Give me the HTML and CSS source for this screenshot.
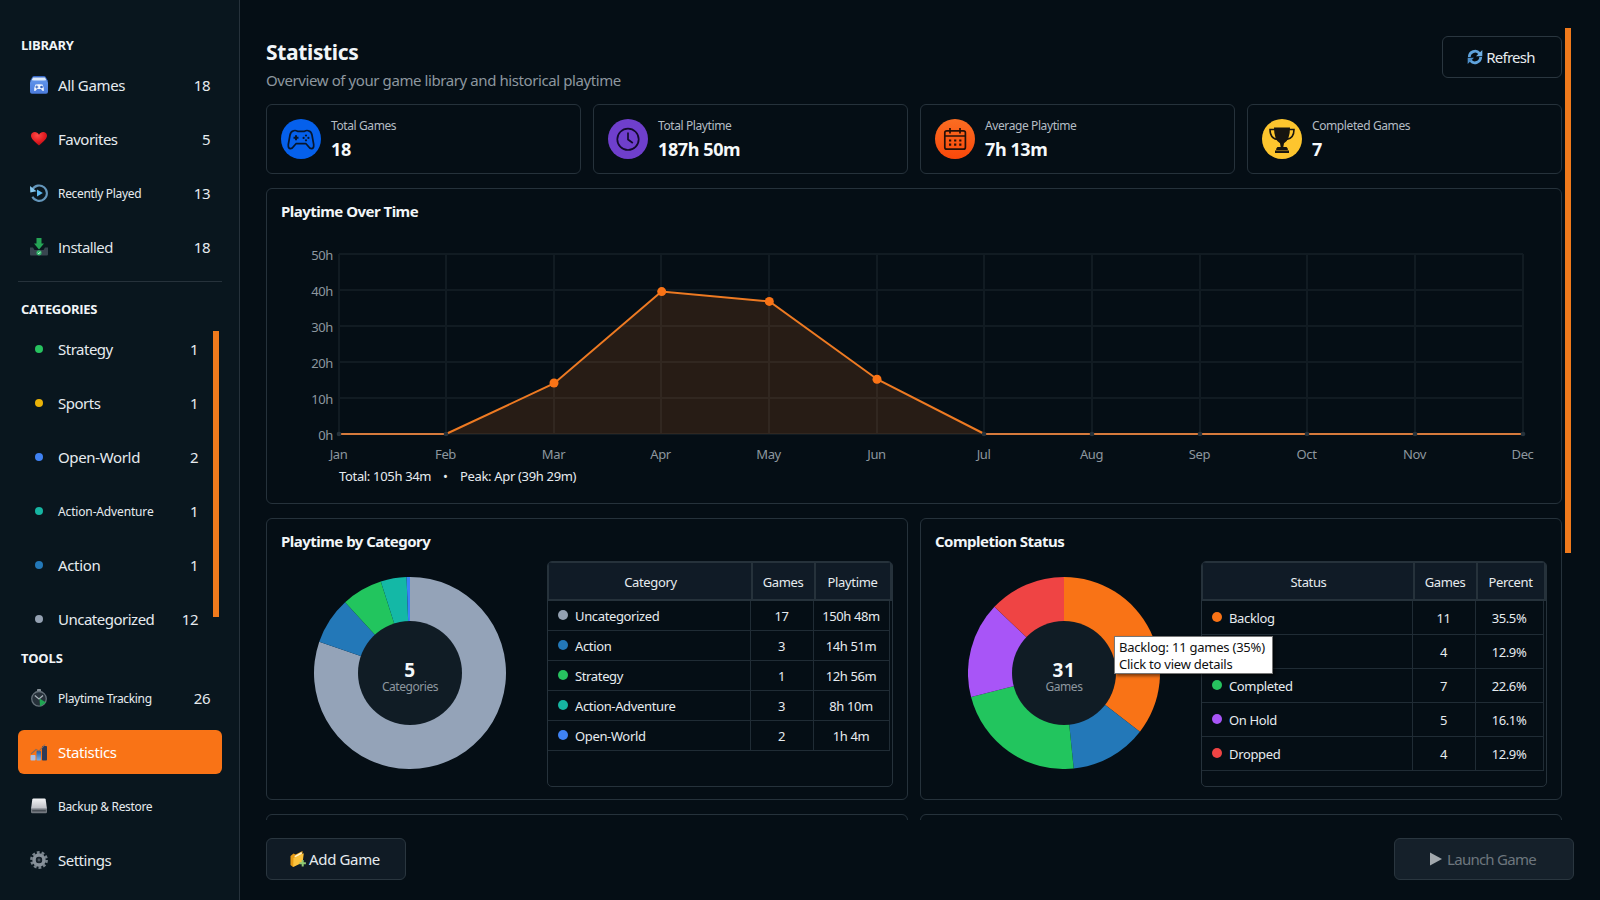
FILE: index.html
```html
<!DOCTYPE html>
<html lang="en">
<head>
<meta charset="utf-8">
<title>Statistics</title>
<link rel="stylesheet" href="styles.css">
</head>
<body>
<div class="app">
  <aside class="sidebar">
    <h2 class="group plain">LIBRARY</h2>
    <nav class="list">
      <a class="item"><svg class="ico" viewBox="0 0 18 18"><defs><linearGradient id="bx" x1="0" y1="0" x2="0" y2="1"><stop offset="0" stop-color="#5f93ea"/><stop offset="1" stop-color="#4b7bdc"/></linearGradient></defs><path d="M2 1.500Q2.300 0 4 0H14Q15.700 0 16 1.500L18 5H0z" fill="#3667c4"/><path d="M3 1.500H15L16.500 4.500Q9 6.500 1.500 4.500z" fill="#dbe9fb"/><rect x="0" y="4.500" width="18" height="13.300" rx="2" fill="url(#bx)"/><path d="M5.500 8.500Q9 7.800 12.500 8.500Q14.200 12 13.800 14.700Q12.500 15.600 11 13H7Q5.500 15.600 4.200 14.700Q3.800 12 5.500 8.500z" fill="#f2f7ff"/><path d="M6.800 9.500v3M5.300 11h3" stroke="#3463bd" stroke-width="1"/><circle cx="11.500" cy="11" r="1.300" fill="#3463bd"/></svg><span class="name wide">All Games</span><span class="num">18</span></a>
      <a class="item"><svg class="ico" viewBox="0 0 18 18"><defs><radialGradient id="ht" cx=".4" cy=".25" r=".8"><stop offset="0" stop-color="#ff4a46"/><stop offset=".6" stop-color="#e01b21"/><stop offset="1" stop-color="#a90d14"/></radialGradient></defs><path d="M9 15.500C4 11.500 1 8.700 1 5.600C1 3.200 2.800 2 4.800 2C6.500 2 8.100 3 9 4.800C9.900 3 11.500 2 13.200 2C15.200 2 17 3.200 17 5.600C17 8.700 14 11.500 9 15.500z" fill="url(#ht)"/></svg><span class="name">Favorites</span><span class="num">5</span></a>
      <a class="item"><svg class="ico" viewBox="0 0 18 18"><path d="M2.400 5.500A7.700 7.700 0 1 1 2.400 12.800" fill="none" stroke="#6496bb" stroke-width="2.100"/><path d="M0 2L.300 8.500L6.500 7.300z" fill="#86c8ef"/><path d="M7 5.500L12.800 9L7 12.500z" fill="#5db8f0"/></svg><span class="name small">Recently Played</span><span class="num">13</span></a>
      <a class="item"><svg class="ico" viewBox="0 0 18 18"><path d="M0 9.500H3L4.500 12H13.500L15 9.500H18V16.500Q18 17.500 17 17.500H1Q0 17.500 0 16.500z" fill="#38454f"/><path d="M6.500 0H11.500V5.500H14L9 11.500L4 5.500H6.500z" fill="#25a455"/><circle cx="9" cy="14.800" r="2.600" fill="#2fb268"/><path d="M7.800 14.900L8.800 15.800L10.400 13.800" fill="none" stroke="#d9ffe6" stroke-width=".9"/></svg><span class="name plain">Installed</span><span class="num">18</span></a>
    </nav>
    <hr class="rule">
    <h2 class="group plain group-cat">CATEGORIES</h2>
    <div class="scroller">
      <nav class="list list-cat">
        <a class="item"><i class="dot green"></i><span class="name">Strategy</span><span class="num">1</span></a>
        <a class="item"><i class="dot yellow"></i><span class="name">Sports</span><span class="num">1</span></a>
        <a class="item"><i class="dot indigo"></i><span class="name wide">Open-World</span><span class="num">2</span></a>
        <a class="item"><i class="dot teal"></i><span class="name small loose">Action-Adventure</span><span class="num">1</span></a>
        <a class="item"><i class="dot blue"></i><span class="name wide">Action</span><span class="num">1</span></a>
        <a class="item"><i class="dot grey"></i><span class="name">Uncategorized</span><span class="num">12</span></a>
      </nav>
      <div class="thumb thumb-side"></div>
    </div>
    <h2 class="group group-tools">TOOLS</h2>
    <nav class="list">
      <a class="item"><svg class="ico" viewBox="0 0 18 18"><rect x="7" y="0" width="4" height="2.500" rx=".8" fill="#88929a"/><circle cx="9" cy="9.800" r="7.300" fill="#26313a" stroke="#66727a" stroke-width="1.300"/><path d="M4.800 6.500L9 10L13 6.500" fill="none" stroke="#a9b3ba" stroke-width="1.200"/><path d="M9.500 9.500L16 13.500L10 17.500z" fill="#1fa552"/></svg><span class="name small">Playtime Tracking</span><span class="num">26</span></a>
      <a class="item active"><svg class="ico" viewBox="0 0 18 18"><defs><linearGradient id="b2" x1="0" y1="0" x2="0" y2="1"><stop offset="0" stop-color="#1f5ea8"/><stop offset="1" stop-color="#79aee6"/></linearGradient></defs><rect x=".5" y="12" width="5" height="5.500" rx=".8" fill="#a9bfe6"/><rect x="6.500" y="8" width="4.500" height="9.500" rx=".8" fill="url(#b2)"/><rect x="12" y="3" width="5" height="14.500" rx=".8" fill="#303a55"/><path d="M1 11L6 6.500L9 8L15 1.500" fill="none" stroke="#8f6a55" stroke-width="1.100"/></svg><span class="name wide">Statistics</span></a>
      <a class="item"><svg class="ico" viewBox="0 0 18 18"><defs><linearGradient id="dr" x1="0" y1="0" x2="0" y2="1"><stop offset="0" stop-color="#f4f5f7"/><stop offset="1" stop-color="#b9bcc2"/></linearGradient></defs><path d="M3.500 1.500H14.500Q15.500 1.500 15.700 2.500L17 12H1L2.300 2.500Q2.500 1.500 3.500 1.500z" fill="url(#dr)"/><path d="M1 11.500H17V15Q17 16.200 15.800 16.200H2.200Q1 16.200 1 15z" fill="#737980"/><rect x="2.200" y="13.200" width="13.600" height="1.200" fill="#3f454c"/></svg><span class="name small">Backup &amp; Restore</span></a>
      <a class="item"><svg class="ico" viewBox="0 0 18 18"><circle cx="9" cy="9" r="7.600" fill="none" stroke="#78838c" stroke-width="2.600" stroke-dasharray="2.800 1.975"/><circle cx="9" cy="9" r="4.900" fill="none" stroke="#87919a" stroke-width="3.600"/><circle cx="9" cy="9" r="3.200" fill="#17222b"/><circle cx="9" cy="9" r="1.400" fill="#49545d"/></svg><span class="name">Settings</span></a>
    </nav>
  </aside>

  <main class="main">
    <div class="viewport">
      <div class="page">
        <header class="head">
          <div>
            <h1 class="title">Statistics</h1>
            <p class="subtitle">Overview of your game library and historical playtime</p>
          </div>
          <button class="btn btn-refresh"><svg class="ico-s" viewBox="0 0 16 16"><g fill="none" stroke="#5fa3dc" stroke-width="2.800"><path d="M2.300 8A5.800 5.800 0 0 1 12.500 4.300"/><path d="M13.700 8A5.800 5.800 0 0 1 3.500 11.700"/></g><path d="M15.300 1V7.200H9z" fill="#6fb0e6"/><path d="M.700 15V8.800H7z" fill="#4d8fca"/></svg><span>Refresh</span></button>
        </header>

        <section class="stats">
          <div class="card stat"><svg class="badge" viewBox="0 0 40 40"><circle cx="20" cy="20" r="20" fill="#0560ec"/><g fill="none" stroke="#06162e" stroke-width="1.700" stroke-linejoin="round"><path d="M12.500 11.800Q14.500 11 16.500 12.300H23.500Q25.500 11 27.500 11.800Q30.300 12.300 31 16L32.700 25.500Q33 29.500 30.500 29.700Q28.800 29.700 27 27L25 24.700H15L13 27Q11.200 29.700 9.500 29.700Q7 29.500 7.300 25.500L9 16Q9.700 12.300 12.500 11.800z"/></g><path d="M15 16.300v5M12.500 18.800h5" stroke="#06162e" stroke-width="2"/><g fill="#06162e"><circle cx="25" cy="16.500" r="1.100"/><circle cx="25" cy="21.300" r="1.100"/><circle cx="22.600" cy="18.900" r="1.100"/><circle cx="27.400" cy="18.900" r="1.100"/></g></svg><div><div class="label">Total Games</div><div class="value">18</div></div></div>
          <div class="card stat"><svg class="badge" viewBox="0 0 40 40"><circle cx="20" cy="20" r="20" fill="#6f3fcc"/><circle cx="20" cy="20.300" r="10.700" fill="none" stroke="#120a2b" stroke-width="1.700"/><path d="M20 13.500V20.500L24.800 24" fill="none" stroke="#120a2b" stroke-width="1.700"/></svg><div><div class="label">Total Playtime</div><div class="value">187h 50m</div></div></div>
          <div class="card stat"><svg class="badge" viewBox="0 0 40 40"><defs><linearGradient id="og" x1="0" y1="0" x2="0" y2="1"><stop offset="0" stop-color="#fb6d22"/><stop offset="1" stop-color="#f9480a"/></linearGradient></defs><circle cx="20" cy="20" r="20" fill="url(#og)"/><rect x="9.800" y="11.800" width="20.600" height="18.400" rx="2" fill="none" stroke="#241008" stroke-width="1.700"/><path d="M10 17H30.500M15 9V14.500M25 9V14.500" stroke="#241008" stroke-width="1.700"/><path d="M14 21.500h12.500M14 25.700h12.500" stroke="#241008" stroke-width="2.200" stroke-dasharray="2.200 2.900"/></svg><div><div class="label">Average Playtime</div><div class="value">7h 13m</div></div></div>
          <div class="card stat"><svg class="badge" viewBox="0 0 40 40"><circle cx="20" cy="20" r="20" fill="#fdc52e"/><path d="M12 8.500H28Q28 21 22 24.300L21.300 28H24.500Q26 28.500 26 31.500H27V34H13V31.500H14Q14 28.500 15.500 28H18.700L18 24.300Q12 21 12 8.500z" fill="#161410"/><path d="M13 10.500H8Q8 19.500 15.500 20.500M27 10.500H32Q32 19.500 24.500 20.500" fill="none" stroke="#161410" stroke-width="1.600"/><path d="M14 31.600H26" stroke="#a07c20" stroke-width=".8"/></svg><div><div class="label">Completed Games</div><div class="value">7</div></div></div>
        </section>

        <section class="card chart-card">
          <h3 class="heading">Playtime Over Time</h3>
          <svg class="chart" viewBox="0 0 1294 314">
            <g class="grid" id="grid"></g>
            <path class="area" d="M179 245L287 194.500L394.500 103L502.500 112.500L610.500 190.500L717.500 245z"/>
            <path class="line base" d="M72 245H179.500M717 245H1256"/>
            <path class="line" d="M179 245L287 194.500L394.500 102.500L502.500 112.500L610.500 190.500L717.500 245"/>
            <g class="pt"><circle cx="287" cy="194" r="4.500"/><circle cx="394.700" cy="102.600" r="4.500"/><circle cx="502.300" cy="112.400" r="4.500"/><circle cx="610" cy="190.200" r="4.500"/></g>
            <g class="zero" id="zero"></g>
            <g class="axis" id="axis"></g>
            <text class="sum" x="72" y="292">Total: 105h 34m</text>
            <text class="sum" x="176" y="292">•</text>
            <text class="sum" x="193" y="292">Peak: Apr (39h 29m)</text>
          </svg>
        </section>

        <section class="pair">
          <div class="card donut-card">
            <h3 class="heading">Playtime by Category</h3>
            <div class="donut-row">
              <div class="donut"><svg viewBox="0 0 192 192"><g id="d1"></g><circle cx="96" cy="96" r="52" fill="#101c25"/></svg><div class="center"><b>5</b><span>Categories</span></div></div>
              <div class="table t-cat">
                <div class="tr th"><span>Category</span><span>Games</span><span>Playtime</span></div>
                <div class="tr"><span><i class="dot grey"></i>Uncategorized</span><span>17</span><span>150h 48m</span></div>
                <div class="tr"><span><i class="dot blue"></i>Action</span><span>3</span><span>14h 51m</span></div>
                <div class="tr"><span><i class="dot green"></i>Strategy</span><span>1</span><span>12h 56m</span></div>
                <div class="tr"><span><i class="dot teal"></i>Action-Adventure</span><span>3</span><span>8h 10m</span></div>
                <div class="tr"><span><i class="dot indigo"></i>Open-World</span><span>2</span><span>1h 4m</span></div>
              </div>
            </div>
          </div>
          <div class="card donut-card">
            <h3 class="heading">Completion Status</h3>
            <div class="donut-row">
              <div class="donut"><svg viewBox="0 0 192 192"><g id="d2"></g><circle cx="96" cy="96" r="52" fill="#101c25"/></svg><div class="center"><b>31</b><span>Games</span></div></div>
              <div class="table t-status">
                <div class="tr th"><span>Status</span><span>Games</span><span>Percent</span></div>
                <div class="tr"><span><i class="dot orange"></i>Backlog</span><span>11</span><span>35.5%</span></div>
                <div class="tr"><span></span><span>4</span><span>12.9%</span></div>
                <div class="tr"><span><i class="dot green"></i>Completed</span><span>7</span><span>22.6%</span></div>
                <div class="tr"><span><i class="dot purple"></i>On Hold</span><span>5</span><span>16.1%</span></div>
                <div class="tr"><span><i class="dot red"></i>Dropped</span><span>4</span><span>12.9%</span></div>
              </div>
            </div>
            <div class="tip"><div>Backlog: 11 games (35%)</div><div>Click to view details</div></div>
          </div>
        </section>

        <section class="pair next"><div class="card"></div><div class="card"></div></section>
      </div>
      <div class="thumb thumb-main"></div>
    </div>
    <footer class="foot">
      <button class="btn btn-add"><svg class="ico-s" viewBox="0 0 16 16"><path d="M.500 5L3.500 2.500L5.500 3.500L12.500 0V10L3 16L.500 14z" fill="#e59a14"/><path d="M4.500 5L11.500 1L12 3L5 7z" fill="#fff1c8"/><path d="M3.500 7L13.800 2.300L12.600 11.500L3.200 16z" fill="#fbc23c"/><path d="M12.700 9v6.400M9.500 12.200h6.400" stroke="#8fc973" stroke-width="2"/></svg><span>Add Game</span></button>
      <button class="btn btn-launch"><svg class="play" viewBox="0 0 12 14"><path d="M0 .500L12 7L0 13.500z" fill="#a3a9ae"/></svg><span>Launch Game</span></button>
    </footer>
  </main>
</div>
<script src="charts.js"></script>
</body>
</html>
```
FILE: charts.js
```js
(function () {
  var NS = 'http://www.w3.org/2000/svg';
  function add(parent, tag, attrs, text) {
    var el = document.createElementNS(NS, tag);
    for (var k in attrs) el.setAttribute(k, attrs[k]);
    if (text) el.textContent = text;
    parent.appendChild(el);
  }
  var grid = document.getElementById('grid');
  var axis = document.getElementById('axis');
  var zero = document.getElementById('zero');
  var months = ['Jan', 'Feb', 'Mar', 'Apr', 'May', 'Jun', 'Jul', 'Aug', 'Sep', 'Oct', 'Nov', 'Dec'];
  for (var i = 0; i <= 5; i++) {
    var y = 245 - i * 36;
    add(grid, 'line', { x1: 72, x2: 1256, y1: y, y2: y });
    add(axis, 'text', { x: 66, y: y + 6, 'text-anchor': 'end' }, i * 10 + 'h');
  }
  months.forEach(function (m, n) {
    var x = Math.floor(72 + n * 107.64);
    add(grid, 'line', { x1: x, x2: x, y1: 65, y2: 245 });
    add(axis, 'text', { x: x - 0.5, y: 270, 'text-anchor': 'middle' }, m);
    if (n < 2 || n > 5) add(zero, 'circle', { cx: x, cy: 245, r: 2.3 });
  });

  function donut(id, parts) {
    var g = document.getElementById(id);
    var total = parts.reduce(function (s, p) { return s + p[0]; }, 0);
    var a = -Math.PI / 2;
    parts.forEach(function (p) {
      var b = a + p[0] / total * Math.PI * 2;
      var big = b - a > Math.PI ? 1 : 0;
      add(g, 'path', {
        fill: p[1],
        d: 'M96 96L' + (96 + 96 * Math.cos(a)) + ' ' + (96 + 96 * Math.sin(a)) +
          'A96 96 0 ' + big + ' 1 ' + (96 + 96 * Math.cos(b)) + ' ' + (96 + 96 * Math.sin(b)) + 'z'
      });
      a = b;
    });
  }
  donut('d1', [[9048, '#94a3b8'], [891, '#2378b8'], [776, '#22c55e'], [490, '#14b8a6'], [64, '#3b82f6']]);
  donut('d2', [[11, '#f97316'], [4, '#2378b8'], [7, '#22c55e'], [5, '#a855f7'], [4, '#ef4444']]);
})();
```
FILE: styles.css
```css
* { box-sizing: border-box; margin: 0; padding: 0; }
body { width: 1600px; height: 900px; overflow: hidden; background: #050e15; color: #e6ebef; font-family: "Noto Sans", sans-serif; }
.plain { font-family: "Open Sans", sans-serif; }
.app { display: flex; height: 900px; }
.sidebar { width: 240px; height: 900px; padding: 34px 17px 0 18px; background: #09161e; border-right: 1px solid #26323b; display: flex; flex-direction: column; }
.group { height: 22px; line-height: 22px; margin-bottom: 7px; padding-left: 3px; font-size: 13px; font-weight: 700; color: #f1f5f8; letter-spacing: -.3px; }
.list { display: flex; flex-direction: column; gap: 10px; width: 204px; }
.item { display: flex; align-items: center; height: 44px; padding: 0 12px; border-radius: 6px; }
.ico { width: 18px; height: 18px; margin-right: 10px; }
.name { flex: 1; font-size: 15px; line-height: 20px; white-space: nowrap; letter-spacing: -.5px; padding-bottom: 1px; }
.wide { letter-spacing: -.35px; }
.small { font-size: 12px; letter-spacing: -.33px; padding: 1px 0 0; }
.loose { letter-spacing: -.15px; }
.num { font-size: 15px; letter-spacing: -.5px; padding-bottom: 1px; }
.active { background: #f97316; color: #fff; }
.rule { border: 0; height: 1px; background: #26323b; margin-top: 12px; width: 204px; }
.group-cat { margin: 16px 0 7px; }
.scroller { display: flex; height: 315px; }
.list-cat { width: 192px; }
.thumb { background: #f07a1c; width: 6px; }
.thumb-side { height: 286px; margin: 4px 0 0 3px; }
.dot { display: inline-block; flex: none; border-radius: 50%; width: 8px; height: 8px; margin: 0 15px 0 5px; }
.group-tools { margin: 5px 0 7px; letter-spacing: -.1px; }
.green { background: #27c25f; }
.yellow { background: #eab308; }
.indigo { background: #3f82f3; }
.teal { background: #16b5a2; }
.blue { background: #2378b8; }
.grey { background: #94a1b2; }
.orange { background: #f97316; }
.purple { background: #a855f7; }
.red { background: #ef4444; }

.main { width: 1360px; height: 900px; }
.viewport { display: flex; height: 820px; overflow: hidden; padding: 28px 0 0 26px; }
.page { width: 1296px; }
.thumb-main { height: 525px; margin-left: 3px; }
.head { display: flex; justify-content: space-between; height: 76px; padding-top: 8px; }
.title { font-size: 21px; line-height: 32px; letter-spacing: -.35px; font-weight: 700; color: #f1f5f8; }
.subtitle { font-size: 15px; line-height: 24px; color: #8d979f; letter-spacing: -.41px; }
.btn { display: flex; align-items: center; justify-content: center; height: 42px; border: 1px solid #2a363f; border-radius: 6px; background: #101b25; color: #e6ebef; font: 15px "Noto Sans", sans-serif; letter-spacing: -.35px; padding-right: 2px; }
.btn-refresh { width: 120px; background: transparent; letter-spacing: -.75px; }
.ico-s { width: 16px; height: 16px; margin-right: 3px; }
.card { border: 1px solid #26323b; border-radius: 6px; }
.stats { display: grid; grid-template-columns: repeat(4, 1fr); gap: 12px; }
.stat { display: flex; align-items: center; height: 70px; padding: 0 14px; }
.badge { width: 40px; height: 40px; margin-right: 10px; }
.label { font-size: 12px; line-height: 18px; color: #b4bcc3; letter-spacing: -.4px; }
.value { font-size: 18px; line-height: 24px; margin-top: 2px; margin-bottom: 1px; font-weight: 700; color: #f5f8fa; letter-spacing: -.4px; }
.chart-card { height: 316px; margin-top: 14px; display: grid; }
.heading { grid-area: 1 / 1; height: 34px; font-size: 15px; line-height: 22px; padding: 11px 14px 0; font-weight: 700; color: #f1f5f8; letter-spacing: -.52px; }
.chart { grid-area: 1 / 1; width: 1294px; height: 314px; }
.grid line { stroke: #111b22; stroke-width: 2; }
.area { fill: #f97316; fill-opacity: .14; }
.line { fill: none; stroke: #ee7a22; stroke-width: 2; }
.line.base { stroke: #d67a3c; }
.pt circle { fill: #f97316; }
.zero circle { fill: #26323b; }
.axis text { font-size: 13px; fill: #8d979f; letter-spacing: -.4px; }
.sum { font-size: 13px; fill: #e6ebef; letter-spacing: -.33px; }
.pair { display: grid; grid-template-columns: 1fr 1fr; gap: 12px; margin-top: 14px; }
.donut-card { height: 282px; position: relative; }
.donut-row { display: flex; padding-left: 47px; }
.donut { display: grid; width: 192px; height: 192px; margin: 24px 41px 0 0; }
.donut svg, .center { grid-area: 1 / 1; width: 192px; height: 192px; }
.center { display: flex; flex-direction: column; align-items: center; padding-top: 84px; }
.center b { font-size: 19px; line-height: 19px; color: #f5f8fa; letter-spacing: .6px; }
.center span { font-size: 12px; line-height: 13px; color: #8d979f; letter-spacing: -.45px; }
.table { width: 346px; height: 226px; margin-top: 8px; border: 1px solid #26323b; border-radius: 5px; font-size: 13px; overflow: hidden; letter-spacing: -.4px; }
.tr { display: grid; height: 30px; margin-right: 2px; line-height: 31px; }
.t-cat .tr { grid-template-columns: 203px 63px 1fr; }
.t-status .tr { grid-template-columns: 211px 63px 1fr; height: 34px; line-height: 34px; }
.tr span { border-right: 1px solid #202c35; border-bottom: 1px solid #202c35; text-align: center; white-space: nowrap; overflow: hidden; padding-right: 1px; }
.tr:not(.th) span:first-child { text-align: left; padding-left: 10px; letter-spacing: -.36px; }
.tr .dot { width: 10px; height: 10px; margin: 0 7px 0 0; vertical-align: 1px; }
.table .th { height: 39px; line-height: 41px; margin-right: 0; background: #101b26; box-shadow: inset 0 0 0 1px #26323b; letter-spacing: -.35px; }
.th span:first-child { padding: 0 0 0 2px; }
.t-cat .th { grid-template-columns: 205px 63px 1fr; }
.t-status .th { grid-template-columns: 213px 63px 1fr; }
.th span { border-right-width: 2px; border-bottom-width: 2px; border-color: #26323b; }
.tip { position: absolute; left: 193px; top: 117px; width: 159px; height: 38px; padding: 2px 4px; background: #fff; border: 1px solid #767676; color: #101010; font-size: 13px; line-height: 17px; white-space: nowrap; box-shadow: 2px 2px 3px rgba(0,0,0,.5); letter-spacing: -.23px; }
.next .card { height: 100px; }
.foot { display: flex; justify-content: space-between; padding: 18px 26px 0; }
.btn-add { width: 140px; }
.btn-launch { width: 180px; background: #15202a; color: #6d767e; letter-spacing: -.75px; }
.play { width: 12px; height: 14px; margin-right: 5px; }
```
